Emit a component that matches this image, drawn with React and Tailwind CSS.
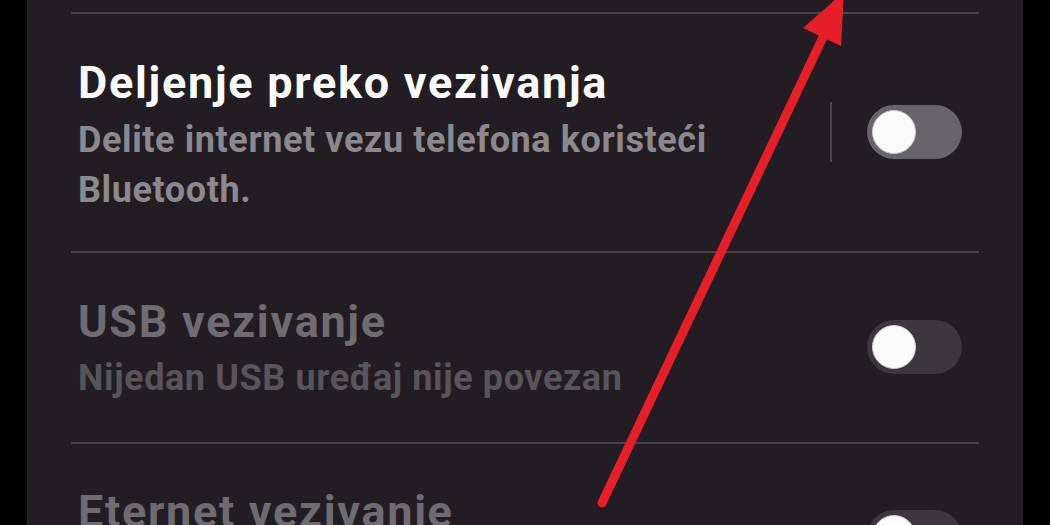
import React from "react";

function Toggle({ track }) {
  return (
    <div className={`w-[95px] h-[54px] rounded-full ${track} flex items-center pl-[5px]`}>
      <div className="w-[44px] h-[44px] rounded-full bg-[#fbfbfb] border border-[#cfcdd0]" />
    </div>
  );
}

const titleCls = "text-[45px] leading-[54px] font-bold tracking-[1.7px]";
const subCls = "text-[36px] leading-[50px] font-bold tracking-[0.6px]";

export default function App() {
  return (
    <div className="relative w-[1050px] h-[525px] bg-black overflow-hidden flex" style={{ fontFamily: "Roboto, 'Noto Sans', sans-serif" }}>
      <div className="ml-[27px] w-[996px] h-full bg-[#221d22] px-[44px] pt-[12px]">
        <div className="h-[2px] bg-[#47434a]" />

        {/* Row 1 */}
        <div className="flex items-center pl-[7px] pr-[17px] pt-[42px] pb-[36px]">
          <div className="flex-1">
            <div className={`${titleCls} text-[#fafafa]`}>Deljenje preko vezivanja</div>
            <div className={`mt-[5px] ${subCls} text-[#8c898e] w-[680px]`}>
              Delite internet vezu telefona koristeći Bluetooth.
            </div>
          </div>
          <div className="flex items-center mb-[8px]">
            <div className="w-[2px] h-[60px] bg-[#48444a] mr-[35px]" />
            <Toggle track="bg-[#67656a]" />
          </div>
        </div>
        <div className="h-[2px] bg-[#47434a]" />

        {/* Row 2 */}
        <div className="flex items-center pl-[7px] pr-[17px] pt-[42px] pb-[39px]">
          <div className="flex-1">
            <div className={`${titleCls} text-[#6e6b71]`}>USB vezivanje</div>
            <div className={`mt-[4px] ${subCls} text-[#57545a]`}>Nijedan USB uređaj nije povezan</div>
          </div>
          <div className="mb-[5px]">
            <Toggle track="bg-[#3b373d]" />
          </div>
        </div>
        <div className="h-[2px] bg-[#47434a]" />

        {/* Row 3 */}
        <div className="flex items-center pl-[7px] pr-[17px] pt-[41px] pb-[39px]">
          <div className="flex-1">
            <div className={`${titleCls} text-[#6e6b71]`}>Eternet vezivanje</div>
            <div className={`mt-[4px] ${subCls} text-[#57545a]`}>Nijedan Eternet uređaj nije povezan</div>
          </div>
          <div className="mb-[5px]">
            <Toggle track="bg-[#3b373d]" />
          </div>
        </div>
      </div>

      <svg className="absolute inset-0 pointer-events-none" width="1050" height="525" viewBox="0 0 1050 525">
        <line x1="602" y1="503" x2="824" y2="35" stroke="#e61e27" strokeWidth="9" strokeLinecap="round" />
        <polygon points="803,28 841,46 844,-8" fill="#e61e27" />
      </svg>
    </div>
  );
}
